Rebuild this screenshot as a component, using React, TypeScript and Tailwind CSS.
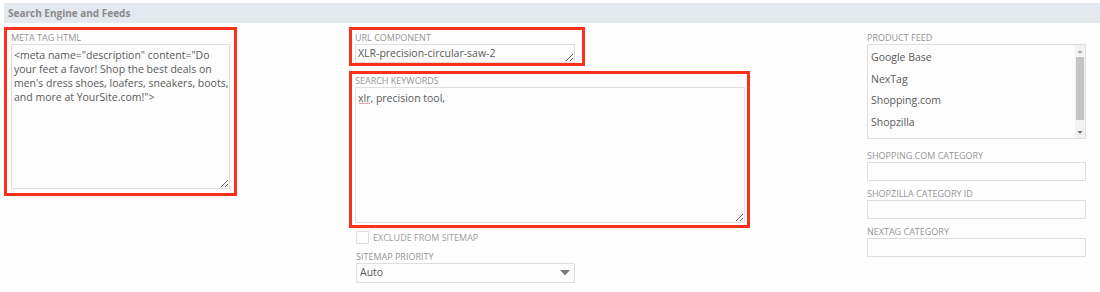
import React from "react";

const font = "font-['Open_Sans','Liberation_Sans',sans-serif]";

function Label({ children, className = "" }: { children: React.ReactNode; className?: string }) {
  return (
    <div className={`text-[9px] leading-[12px] uppercase text-[#949494] ${className}`}>{children}</div>
  );
}

function TextArea({ value, className }: { value: string; className: string }) {
  return (
    <textarea
      readOnly
      value={value}
      spellCheck={false}
      wrap="off"
      className={`block resize overflow-hidden whitespace-pre border border-[#dedede] bg-[#fcfcfc] px-[2px] pt-[3px] text-[10.5px] leading-[14px] text-[#5a5a5a] outline-none ${className}`}
    />
  );
}

function Field({ label, className = "" }: { label: string; className?: string }) {
  return (
    <div className={className}>
      <Label>{label}</Label>
      <div className="h-[19px] w-[219px] border border-[#dedede] bg-[#fcfcfc]" />
    </div>
  );
}

const feeds = ["Google Base", "NexTag", "Shopping.com", "Shopzilla", "Yahoo Shopping"];

export default function App() {
  return (
    <div className={`h-[292px] w-[1100px] overflow-hidden bg-[#fefefe] ${font}`}>
      <div className="pl-[4px] pt-[3px]">
        <div className="flex h-[20px] items-center bg-[#e4e8ef] pl-[4px] text-[10px] font-bold text-[#8a8a8a]">
          Search Engine and Feeds
        </div>
      </div>

      <div className="flex pl-[4px] pt-[4px]">
        {/* column 1 */}
        <div className="h-[169px] w-[233px] border-[3px] border-[#f9311a] pl-[4px] pt-[2px]">
          <Label>Meta Tag HTML</Label>
          <TextArea
            className="h-[145px] w-[219px]"
            value={
              '<meta name="description" content="Do\nyour feet a favor! Shop the best deals on\nmen\'s dress shoes, loafers, sneakers, boots,\nand more at YourSite.com!">'
            }
          />
        </div>

        {/* column 2 */}
        <div className="ml-[112px] w-[402px]">
          <div className="h-[39px] w-[236px] border-[3px] border-[#f9311a] pl-[3px] pt-[2px]">
            <Label>URL Component</Label>
            <textarea
              readOnly
              value="XLR-precision-circular-saw-2"
              spellCheck={false}
              className="block h-[19px] w-[220px] resize overflow-hidden border border-[#dedede] bg-[#fcfcfc] px-[2px] pt-[1px] text-[10.5px] leading-[15px] text-[#5a5a5a] outline-none"
            />
          </div>
          <div className="mt-[5px] h-[157px] w-[401px] border-[3px] border-[#f9311a] pl-[3px] pt-[1px]">
            <Label>Search Keywords</Label>
            <div className="relative">
              <TextArea className="h-[136px] w-[390px]" value="xlr, precision tool," />
              <span className="pointer-events-none absolute left-[4px] top-[16px] h-[1px] w-[11px] bg-[#e8a0a0]" />
            </div>
          </div>
          <div className="ml-[7px] mt-[2px] flex items-center gap-[4px]">
            <div className="h-[13px] w-[13px] border border-[#dedede] bg-[#fcfcfc]" />
            <span className="pt-[2px] text-[9px] leading-[12px] text-[#9c9c9c]">EXCLUDE FROM SITEMAP</span>
          </div>
          <div className="ml-[7px] mt-[7px]">
            <Label>Sitemap Priority</Label>
            <div className="flex h-[20px] w-[219px] items-center justify-between border border-[#dedede] bg-[#fcfcfc] pl-[3px] pr-[4px] text-[10.5px] text-[#5a5a5a]">
              <span>Auto</span>
              <svg width="10" height="6" viewBox="0 0 10 6">
                <path d="M0 0 H10 L5 5.5 Z" fill="#7a7a7a" />
              </svg>
            </div>
          </div>
        </div>

        {/* column 3 */}
        <div className="ml-[116px] w-[220px] pt-[5px]">
          <Label>Product Feed</Label>
          <div className="flex h-[95px] w-[219px] overflow-hidden border border-[#dedede] bg-[#fcfcfc]">
            <div className="flex-1 pl-[3px] pt-[2px] text-[10.5px] leading-[21.5px] text-[#5a5a5a]">
              {feeds.map((f) => (
                <div key={f}>{f}</div>
              ))}
            </div>
            <div className="flex w-[10px] flex-col items-center bg-[#f3f3f3]">
              <svg width="6" height="8" viewBox="0 0 6 8" className="mt-[3px]">
                <path d="M0.5 5 L3 2 L5.5 5 Z" fill="#a3a3a3" />
              </svg>
              <div className="mt-[1px] h-[63px] w-[8px] bg-[#c4c4c4]" />
              <div className="flex-1" />
              <svg width="6" height="8" viewBox="0 0 6 8" className="mb-[2px]">
                <path d="M0.5 3 L3 6 L5.5 3 Z" fill="#6f6f6f" />
              </svg>
            </div>
          </div>
          <Field label="Shopping.com Category" className="mt-[11px]" />
          <Field label="Shopzilla Category ID" className="mt-[7px]" />
          <Field label="Nextag Category" className="mt-[7px]" />
        </div>
      </div>
    </div>
  );
}
